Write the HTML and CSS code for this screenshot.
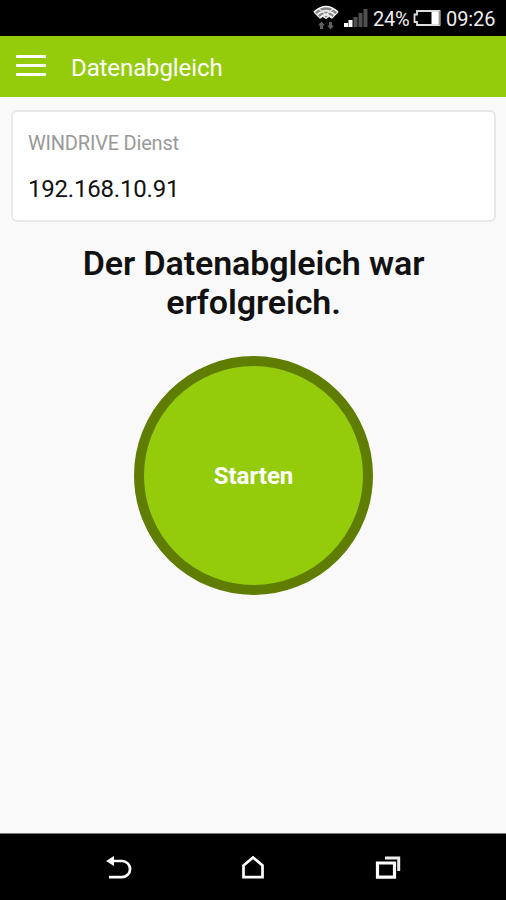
FILE: index.html
```html
<!DOCTYPE html>
<html lang="de">
<head>
    <meta charset="UTF-8">
    <meta name="viewport" content="width=device-width, initial-scale=1.0">
    <title>Datenabgleich</title>
    <link rel="stylesheet" href="styles.css">
</head>
<body>
    <!-- Status bar -->
    <div class="status-bar">
        <svg class="wifi-icon" width="26" height="26" viewBox="0 0 26 26" fill="none">
            <path d="M1 7Q13-4 25 7L19 13L16 12L13 14L10 12L7 13Z" fill="#888"/>
            <path d="M1 7Q13-4 25 7M4 10Q13 1.500 22 10M7 13Q13 6 19 13" stroke="#fff" stroke-width="1.600"/>
            <path d="M1 7L7 13L10 11L13 13.500L16 11L19 13L25 7M6 4L16 12M20 4L10 12" stroke="#e5e5e5" stroke-width="1.200"/>
            <path d="M5 20.500L8.500 16.500L12 20.500H10V24H7V20.500ZM14 20.500L17.500 24.500L21 20.500H19V17H16V20.500Z" fill="#606060"/>
        </svg>
        <svg class="signal-icon" width="24" height="18" viewBox="0 0 24 18">
            <path d="M0 14H4V18H0ZM4.500 11H8.500V18H4.500Z" fill="#fff"/>
            <path d="M9.500 8H13.500V18H9.500ZM14.500 4H18.500V18H14.500ZM19.500 0H23.500V18H19.500Z" fill="#505050"/>
        </svg>
        <span class="battery-level">24%</span>
        <svg class="battery-icon" width="28" height="18" viewBox="0 0 28 18">
            <path d="M4 2H26.500V16H4V13H1.500V5.500H4Z" fill="none" stroke="#ddd" stroke-width="1.800"/>
            <path d="M18.500 3H26V15H18.500Z" fill="#fff"/>
            <path d="M26.500 2V16" stroke="#999" stroke-width="1.800"/>
        </svg>
        <span class="clock">09:26</span>
    </div>

    <!-- Header -->
    <header class="app-header">
        <button class="menu-btn" aria-label="Menü">
            <span></span>
            <span></span>
            <span></span>
        </button>
        <h1 class="app-title">Datenabgleich</h1>
    </header>

    <main class="content">
        <div class="service-card">
            <p class="service-label">WINDRIVE Dienst</p>
            <p class="service-address">192.168.10.91</p>
        </div>
        <h2 class="message">Der Datenabgleich war<br>erfolgreich.</h2>
        <button class="start-btn">Starten</button>
    </main>

    <!-- Navigation bar -->
    <nav class="nav-bar">
        <svg width="28" height="26" viewBox="0 0 28 26" fill="none">
            <path d="M8 7H18A8 8 0 0 1 18 23.200H5" stroke="#fff" stroke-width="2.700"/>
            <path d="M2 7L10 2V12Z" fill="#fff"/>
        </svg>
        <svg width="28" height="26" viewBox="0 0 28 26" fill="none">
            <path d="M4.500 11.500L14 3.500L23.500 11.500V23.200H4.500Z" stroke="#fff" stroke-width="2.700"/>
        </svg>
        <svg width="28" height="26" viewBox="0 0 28 26" fill="none">
            <path d="M3.500 9H20.500V23.200H3.500Z" stroke="#fff" stroke-width="3.200"/>
            <path d="M11 4H24.700V17" stroke="#eee" stroke-width="3"/>
        </svg>
    </nav>
</body>
</html>
```
FILE: styles.css
```css
:root {
    --primary: #94cc0c;
    --primary-dark: #5f7d00;
    --background: #f9f9f9;
}

* {
    box-sizing: border-box;
    margin: 0;
    padding: 0;
    font-family: Roboto, sans-serif;
}

body {
    display: flex;
    flex-direction: column;
    height: 100vh;
    overflow: hidden;
    background: var(--background);
}

.status-bar {
    display: flex;
    align-items: center;
    height: 36px;
    padding-left: 313px;
    background: #000;
    color: #eee;
    font-size: 20px;
    white-space: nowrap;
}

.status-bar svg {
    flex: none;
}

.signal-icon {
    margin-left: 5px;
}

.battery-level {
    width: 36px;
    margin: 1px 0 0 5px;
    letter-spacing: -0.2px;
}

.battery-icon {
    margin-left: 4px;
}

.clock {
    margin: 1px 0 0 5px;
    letter-spacing: -0.1px;
}

.app-header {
    display: flex;
    align-items: center;
    height: 61px;
    padding-left: 16px;
    background: var(--primary);
    color: #fff;
}

.menu-btn {
    display: flex;
    flex-direction: column;
    gap: 6px;
    width: 30px;
    margin-top: -2px;
    border: none;
    background: none;
    cursor: pointer;
}

.menu-btn span {
    height: 3px;
    border-radius: 1px;
    background: #fff;
}

.app-title {
    margin: 2px 0 0 25px;
    font-size: 24px;
    font-weight: 400;
    letter-spacing: -0.1px;
}

.content {
    display: flex;
    flex: 1;
    flex-direction: column;
    align-items: center;
    padding: 13px 10px 0 11px;
}

.service-card {
    width: 100%;
    height: 112px;
    padding: 19px 15px;
    border: 2px solid #e8e8e8;
    border-radius: 6px;
    background: #fff;
}

.service-label {
    color: #999;
    font-size: 20px;
    line-height: 24px;
    letter-spacing: -0.2px;
}

.service-address {
    margin-top: 19px;
    color: #111;
    font-size: 24px;
    line-height: 30px;
    letter-spacing: -0.2px;
}

.message {
    margin-top: 22px;
    color: #111;
    font-size: 34px;
    font-weight: 600;
    line-height: 39px;
    letter-spacing: -0.1px;
    text-align: center;
}

.start-btn {
    width: 239px;
    height: 239px;
    margin-top: 34px;
    border: 10px solid var(--primary-dark);
    border-radius: 50%;
    background: var(--primary);
    color: #fff;
    font-size: 24px;
    font-weight: 700;
    cursor: pointer;
}

.nav-bar {
    display: flex;
    align-items: center;
    justify-content: center;
    gap: 107px;
    height: 67px;
    padding-bottom: 1px;
    border-top: 1px solid #777;
    background: #000;
}
```
